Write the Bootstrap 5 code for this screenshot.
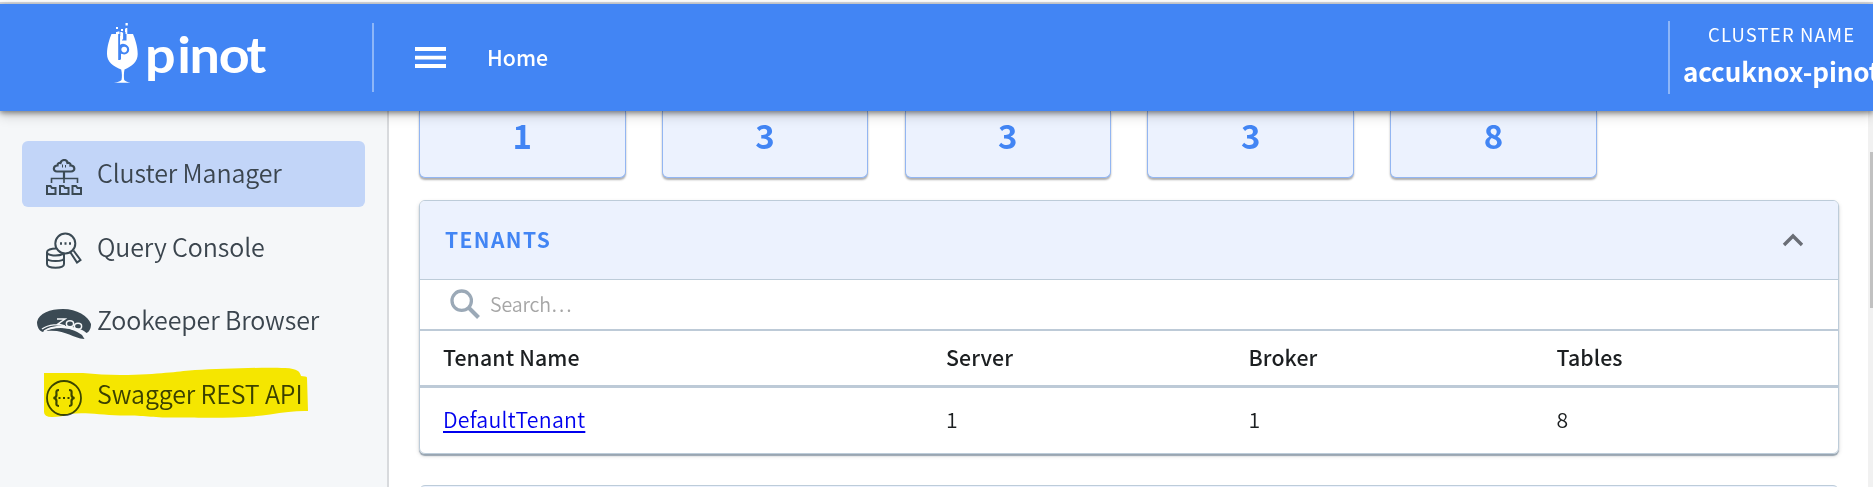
<!DOCTYPE html>
<html lang="en">
<head>
<meta charset="utf-8">
<meta name="viewport" content="width=device-width, initial-scale=1">
<title>Pinot Cluster Manager</title>
<link href="https://cdn.jsdelivr.net/npm/bootstrap@5.3.0/dist/css/bootstrap.min.css" rel="stylesheet">
<style>
body{font-family:"Noto Sans CJK SC","Source Sans Pro",sans-serif;height:487px;overflow:hidden;background:#fff;color:#1c1f21}
svg{display:block;flex:none}
.topline{height:4px;border-top:2px solid #fff;background:#dadce0}
.appbar{height:107px;background:#4285f4;color:#fff;z-index:5;box-shadow:0 2px 5px rgba(0,0,0,.4),0 4px 12px rgba(0,0,0,.2)}
.brand{width:374px;height:69px;margin-top:19px;border-right:2px solid rgba(255,255,255,.4)}
.home{font-size:21.3px;line-height:30px;font-weight:500;margin:38px 0 0 41px}
.cluster{width:205px;height:73px;margin-top:17px;border-left:2px solid rgba(255,255,255,.4);white-space:nowrap}
.cluster-label{font-size:18.5px;line-height:24px;letter-spacing:1.15px;padding:1px 0 0 38px}
.cluster-title{font-size:26px;line-height:36px;font-weight:700;padding:7px 0 0 13px;letter-spacing:-.1px}
.side{width:389px;background:#f5f7f9;border-right:2px solid #d8dadd;padding:30px 22px 0;gap:7.7px}
.side-item{height:66px;width:343px;border-radius:6px;color:#3b454e;font-size:25px;font-weight:350;letter-spacing:-.12px;line-height:64px;white-space:nowrap;text-decoration:none}
.side-item.active{background:#c2d5f8}
.side-icon{width:75px;padding:6px 0 0 24px}
.side-item span{position:relative;top:-2px}
.marker{position:absolute;left:22px;top:3px;mix-blend-mode:multiply}
.content{padding-left:30px;gap:21px;overflow:hidden;min-width:0}
.tiles{gap:36.2px}
.tile{width:206.6px;height:67px;border:1px solid #93b6f2;border-top:0;border-radius:0 0 6px 6px;background:#ecf2fe;color:#4285f4;font-size:33px;font-weight:700;line-height:48px;text-align:center;box-shadow:0 2px 2px rgba(0,0,0,.32)}
.panel{width:1420px;height:254px;margin-top:1px;border:1px solid #bdccd9;border-radius:6px;overflow:hidden;box-shadow:0 2px 1px #98a5b1,0 2px 4px rgba(0,0,0,.15)}
.panel-head{height:79px;background:#ecf2fe;border-bottom:1px solid #bdccd9;padding:0 31px 0 25px;color:#4285f4;font-size:21px;letter-spacing:1.4px}
.panel-head span{font-weight:700}
.search{height:51px;border-bottom:2px solid #bdcad7;padding-left:30px;color:#a6a6a6;font-size:19.6px;font-weight:350}
.search span{margin:0 0 2px 9px;letter-spacing:-.15px}
.grid-row{display:grid;grid-template-columns:503px 302.5px 308px 1fr;padding-left:23px;align-items:center}
.grid-head{height:57px;border-bottom:3px solid #bdcad7;font-size:21.3px;font-weight:500;letter-spacing:.1px;padding-bottom:2px}
.grid-data{height:65px;font-size:21.3px;font-weight:350;letter-spacing:.25px;padding-bottom:4px}
.grid-data a{color:#00e;text-decoration-thickness:2px;text-underline-offset:3px}
.track{width:5px;background:#f1f1f1;padding:41px 0 0 2px}
.thumb{height:156px;background:#c1c1c1}
.next-panel{width:1420px;height:40px;flex:none;margin-top:10px;border:1px solid #bdccd9;border-radius:6px;background:#ecf2fe}
</style>
</head>
<body class="d-flex flex-column">
<div class="topline flex-shrink-0"></div>
<header class="appbar d-flex flex-shrink-0 position-relative overflow-visible">
  <div class="brand flex-shrink-0">
    <svg width="372" height="69" viewBox="0 23 372 69" fill="#fff">
      <path d="M111.500 34H117.500V31.500H119.500V59.500H121V53.500A5 5 0 1 0 120 45V36H122V40H125V29H127V34H133C135 39 137.700 46 137.700 54C137.700 62 132 66 124.500 69.500C123.700 73 123.800 77 124.200 80Q125.500 81.700 130.500 82.700H114Q120.500 81.700 121.500 80C122.200 77 122 73 121.200 69.500C113 66 107 62 107 54C107 46 109.500 39 111.500 34Z"/>
      <g fill="#4285f4"><path d="M118.200 34h2v26h-2zM122 39h3v-7h1.500v8.500H122z"/><path fill-rule="evenodd" d="M124.200 44.500a5 5 0 1 1 0 10a5 5 0 0 1 0-10zM124.200 46.800a2.800 2.800 0 1 0 0 5.600a2.800 2.800 0 0 0 0-5.600z"/></g>
      <circle cx="124.200" cy="49.600" r="2.800"/><path d="M120.300 32h1.700v12h-1.700z"/>
      <path d="M116 27h2v2h-2zM121 29h2v2h-2zM125.500 23h2.300v2.500h-2.300zM125.500 28h1.800v6h-1.800zM116 32h2v4h-2zM121.300 32.500h1.800v7h-1.800z"/>
      <text transform="translate(145 73) scale(1.1 1)" x="0 29.300 40.500 67 92" y="0" font-family="Lato,sans-serif" font-weight="700" font-size="49">pinot</text>
    </svg>
  </div>
  <svg width="72" height="107" viewBox="374 4 72 107" fill="#fff"><path d="M415 47h31v4h-31zM415 55.700h31v3.800h-31zM415 64h31v4h-31z"/></svg>
  <div class="home">Home</div>
  <div class="cluster ms-auto flex-shrink-0">
    <div class="cluster-label">CLUSTER NAME</div>
    <div class="cluster-title">accuknox-pinot</div>
  </div>
</header>
<div class="d-flex flex-grow-1" style="min-height:0">
  <nav class="side d-flex flex-column flex-shrink-0">
    <a class="side-item active d-flex align-items-center"><div class="side-icon"><svg width="36" height="36" fill="none" stroke="#3b4a54" stroke-width="2.200"><path d="M11 12.500C6.500 12.500 7 6.500 11.500 6.500C11.500 4 13.500 3.500 14.500 4C15.500 0 21 0 21.500 4C23.500 3.500 25 5 24.500 6.500C29.500 6.500 29.500 12.500 25 12.500ZM18 12.500V20"/><path stroke-width="1" d="M16.500 8.500V5.500M19.500 8.500V6"/><path stroke-width="1.600" d="M5.500 24V19.500H31.500V24M18 19V24"/><path stroke-width="2" d="M1 27H4.500L6 29H9.500V35H1ZM14 27H17.500L19 29H22.500V35H14ZM26.500 27H30L31.500 29H35V35H26.500Z"/></svg></div><span>Cluster Manager</span></a>
    <a class="side-item d-flex align-items-center"><div class="side-icon"><svg width="36" height="37" fill="none" stroke="#3b4a54" stroke-width="2"><circle cx="19.300" cy="11.500" r="10"/><path d="M24.500 20.500L31 30.500L34.500 28L27.500 18.500M10 16.500C5 16.500 1 18 1 20V32C1 37 18 37 18 32V21M1 20C1 24 12 24.500 17 22M1 26C1 30 18 30 18 26"/><path d="M14 11.500H16M18.500 11.500H20.500M23 11.500H25" stroke-width="2.400"/></svg></div><span>Query Console</span></a>
    <a class="side-item d-flex align-items-center"><div class="side-icon" style="padding-left:15px"><svg width="54" height="31" viewBox="0 0 54 31"><path fill="#3b4a54" d="M0 13C2 4 13 0 26 0C40 0 51 7 54 15C54 20 52 23 49.500 24C45 20 38 18 29 17C19 16 10 18 6 23C2 22 0 18 0 13ZM9 22C19 16 36 19 45 26L47.500 30C34 29 29 20 9 22Z"/><g fill="none" stroke="#f5f7f9"><path stroke-width="1.500" d="M5 20C12 15 22 15 28 17M20 10H28L21 15L28 17"/><ellipse cx="33" cy="14.700" rx="3.600" ry="3" stroke-width="1.500"/><ellipse cx="41" cy="17.200" rx="3.600" ry="3" stroke-width="1.500"/><path stroke-width="1.200" d="M7 22C19 16 37 18 49 25"/></g></svg></div><span>Zookeeper Browser</span></a>
    <a class="side-item d-flex align-items-center position-relative"><div class="side-icon"><svg width="36" height="36" fill="none" stroke="#3b4a54" stroke-width="1.800"><circle cx="18" cy="18" r="17"/><path stroke-width="2.200" d="M13 10C9.500 10 10.500 12 10.500 15Q10.500 17.500 7.500 18Q10.500 18.500 10.500 21C10.500 24 9.500 26 13 26M23 10C26.500 10 25.500 12 25.500 15Q25.500 17.500 28.500 18Q25.500 18.500 25.500 21C25.500 24 26.500 26 23 26M12.500 18H14.500M17 18H19M21.500 18H23.500"/></svg></div><span>Swagger REST API</span>
      <svg class="marker" width="266" height="54" viewBox="44 365 266 54" fill="#ffee00"><path d="M44 373H83Q105 375.500 128 375C165 374 180 371 195 370C220 369 260 367 285 368C298 368.500 300 372 301 376Q306 376 307 377.500L308 411Q292 410.500 270 414.500C240 419 200 417.500 180 417.500C150 418 145 415 120 415.500C100 415 85 412 70 414Q62 417 52 417Q44 417 44 412Z"/></svg></a>
  </nav>
  <main class="content d-flex flex-column flex-grow-1">
    <div class="tiles d-flex flex-shrink-0">
      <div class="tile">1</div><div class="tile">3</div><div class="tile">3</div><div class="tile">3</div><div class="tile">8</div>
    </div>
    <section class="panel flex-shrink-0">
      <div class="panel-head d-flex align-items-center justify-content-between"><span>TENANTS</span>
        <svg width="28" height="28" fill="none" stroke="#6a6e76" stroke-width="3.400"><path d="M5 19L14 10L23 19"/></svg></div>
      <div class="search d-flex align-items-center"><svg width="31" height="31" fill="none" stroke="#9ba9b7"><circle cx="11.700" cy="11.700" r="9.700" stroke-width="3.300"/><path stroke-width="4" d="M19 19L28.500 28.500"/></svg><span>Search…</span></div>
      <div class="grid-row grid-head"><div>Tenant Name</div><div>Server</div><div>Broker</div><div>Tables</div></div>
      <div class="grid-row grid-data"><div><a href="#">DefaultTenant</a></div><div>1</div><div>1</div><div>8</div></div>
    </section>
    <div class="next-panel"></div>
  </main>
  <div class="track flex-shrink-0"><div class="thumb"></div></div>
</div>
<script src="https://cdn.jsdelivr.net/npm/bootstrap@5.3.0/dist/js/bootstrap.bundle.min.js"></script>
</body>
</html>
